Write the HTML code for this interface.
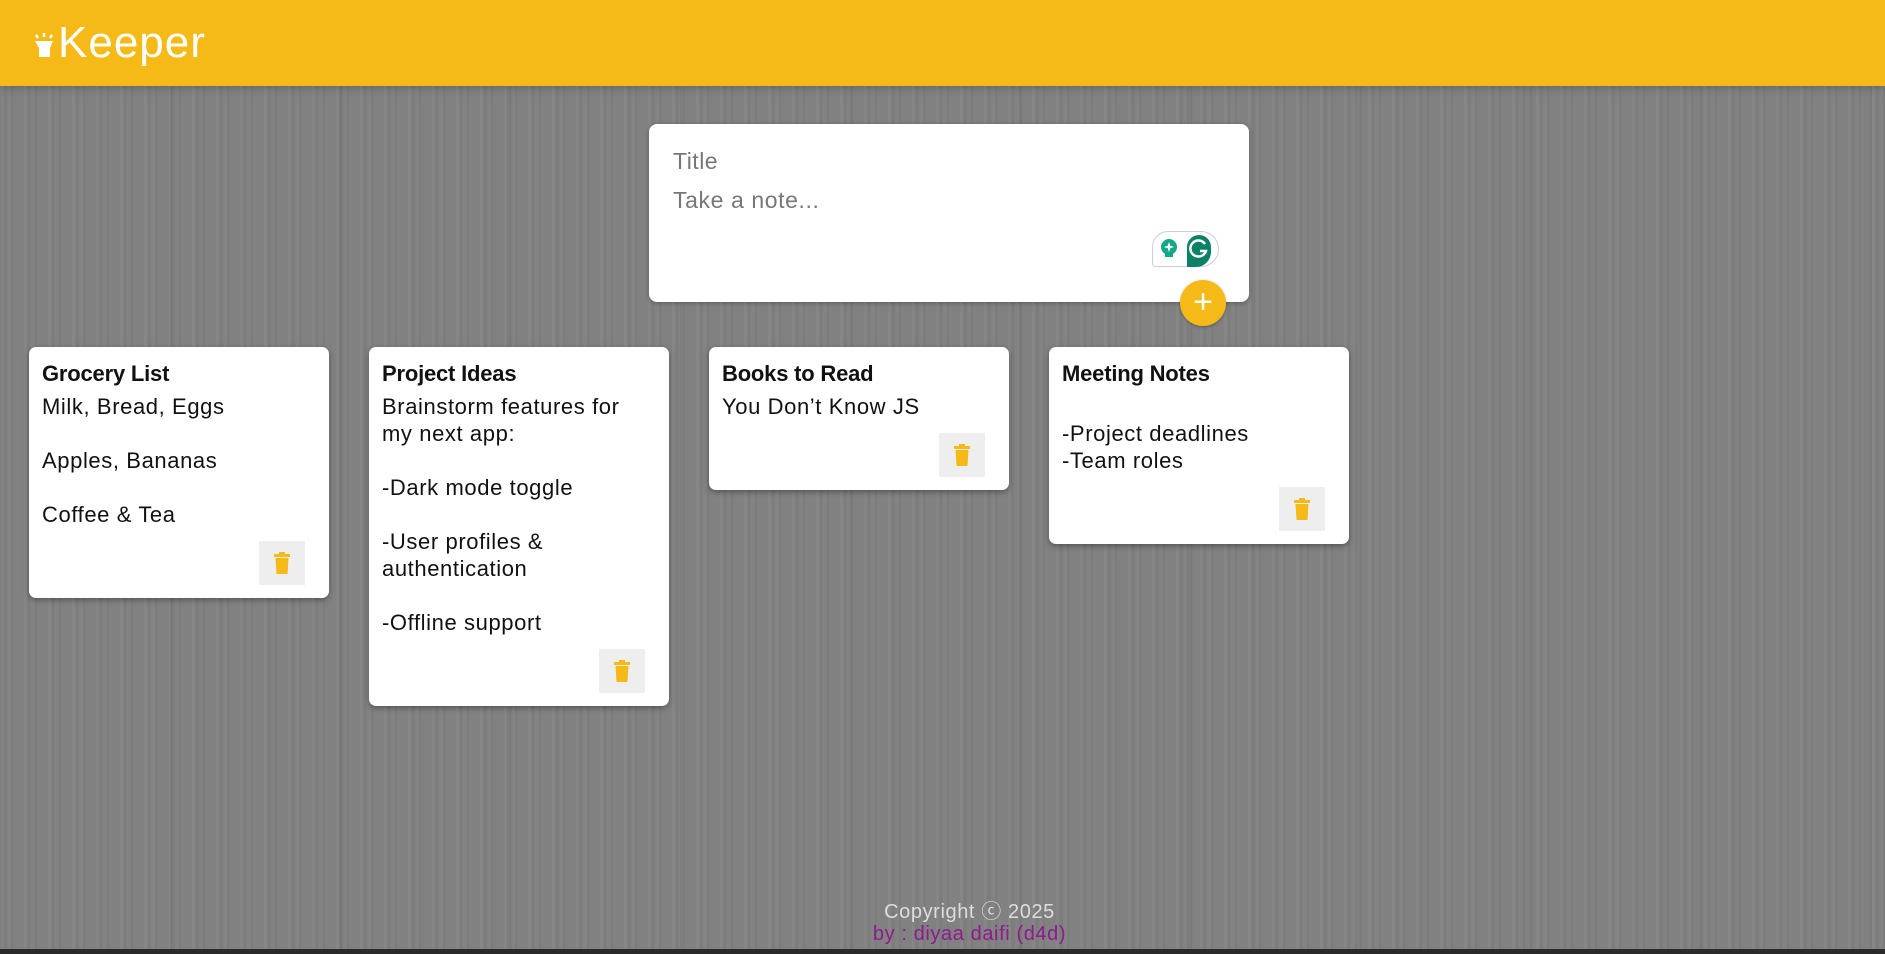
<!DOCTYPE html>
<html><head><meta charset="utf-8"><style>
*{box-sizing:border-box;margin:0;padding:0}
body{width:1885px;height:954px;overflow:hidden;font-family:"Liberation Sans",sans-serif;position:relative;
background:#818181;
background-image:repeating-linear-gradient(90deg,rgba(255,255,255,0.04) 0 3px,rgba(0,0,0,0.03) 3px 7px,rgba(255,255,255,0.02) 7px 11px,rgba(0,0,0,0.04) 11px 13px,transparent 13px 24px),
repeating-linear-gradient(90deg,rgba(0,0,0,0.05) 0 2px,transparent 2px 170px);}
header{position:absolute;left:0;top:0;width:1885px;height:86px;background:#f5ba18;box-shadow:0 0 10px rgba(0,0,0,0.3)}
.logo{position:absolute;left:33px;top:18px;color:#fff;font-size:44px;letter-spacing:1px}
.create{position:absolute;left:649px;top:124px;width:600px;height:178px;background:#fff;border-radius:8px;box-shadow:0 1px 5px rgba(0,0,0,0.3)}
.create .t{position:absolute;left:24px;top:24px;font-size:23px;color:#777;letter-spacing:0.5px}
.create .n{position:absolute;left:24px;top:63px;font-size:23px;color:#777;letter-spacing:0.6px}
.gram{position:absolute;left:503px;top:107px;width:67px;height:36px;border:1px solid #ccd;border-radius:16px 18px 18px 3px;background:#fff}
.plus{position:absolute;left:1180px;top:280px;width:46px;height:46px;border-radius:50%;background:#f5ba18;box-shadow:0 1px 3px rgba(0,0,0,0.3);color:#fff;font-size:34px;line-height:44px;text-align:center;font-weight:300}
.note{position:absolute;top:347px;width:300px;background:#fff;border-radius:7px;box-shadow:0 2px 6px rgba(0,0,0,0.35);padding:13px 13px 13px 13px}
.note h1{font-size:22px;line-height:27px;font-weight:bold;color:#111;margin-bottom:6px;letter-spacing:-0.2px}
.note p{font-size:22px;line-height:27px;color:#111;white-space:pre-wrap;margin-bottom:13px;letter-spacing:0.6px}
.del{margin-left:auto;margin-right:11px;width:46px;height:44px;background:#eee;display:flex;align-items:center;justify-content:center}
.foot{position:absolute;left:27px;width:1885px;text-align:center;font-size:20px;letter-spacing:0.6px}
.bar{position:absolute;left:0;top:949px;width:1885px;height:5px;background:#2a2a2a}
</style></head><body>
<header><div class="logo"><svg width="22" height="26" viewBox="0 0 22 26" style="margin-right:3px;vertical-align:-2px"><path d="M3 2l2 3M11 0v4M19 2l-2 3" stroke="#fff" stroke-width="2.5"/><path d="M2 8h18l-3 7v9H6v-9z" fill="#fff"/></svg>Keeper</div></header>
<div class="create"><div class="t">Title</div><div class="n">Take a note...</div>
<div class="gram"><svg width="67" height="36" viewBox="0 0 67 36"><circle cx="16" cy="15" r="8" fill="#14a88a"/><path d="M12 20h8v5h-8z" fill="#14a88a"/><path d="M16 10l1.3 3.7 3.7 1.3-3.7 1.3-1.3 3.7-1.3-3.7-3.7-1.3 3.7-1.3z" fill="#fff"/><path d="M34 35V15a12 12 0 0 1 24 0v5a15 15 0 0 1-15 15z" fill="#0b8266"/><path d="M52 12a8 8 0 1 0 1 7h-6" stroke="#fff" stroke-width="2.5" fill="none"/></svg></div>
</div>
<div class="plus">+</div>

<div class="note" style="left:29px"><h1>Grocery List</h1><p>Milk, Bread, Eggs

Apples, Bananas

Coffee &amp; Tea</p><div class="del"><svg width="16" height="22" viewBox="0 0 16 22"><rect x="5" y="0" width="6" height="2" fill="#f5ba18"/><rect x="0" y="2" width="16" height="3" fill="#f5ba18"/><path d="M1.5 6h13l-1 16h-11z" fill="#f5ba18"/></svg></div></div>

<div class="note" style="left:369px"><h1>Project Ideas</h1><p>Brainstorm features for
my next app:

-Dark mode toggle

-User profiles &amp;
authentication

-Offline support</p><div class="del"><svg width="16" height="22" viewBox="0 0 16 22"><rect x="5" y="0" width="6" height="2" fill="#f5ba18"/><rect x="0" y="2" width="16" height="3" fill="#f5ba18"/><path d="M1.5 6h13l-1 16h-11z" fill="#f5ba18"/></svg></div></div>

<div class="note" style="left:709px"><h1>Books to Read</h1><p>You Don’t Know JS</p><div class="del"><svg width="16" height="22" viewBox="0 0 16 22"><rect x="5" y="0" width="6" height="2" fill="#f5ba18"/><rect x="0" y="2" width="16" height="3" fill="#f5ba18"/><path d="M1.5 6h13l-1 16h-11z" fill="#f5ba18"/></svg></div></div>

<div class="note" style="left:1049px"><h1>Meeting Notes</h1><p>
-Project deadlines
-Team roles</p><div class="del"><svg width="16" height="22" viewBox="0 0 16 22"><rect x="5" y="0" width="6" height="2" fill="#f5ba18"/><rect x="0" y="2" width="16" height="3" fill="#f5ba18"/><path d="M1.5 6h13l-1 16h-11z" fill="#f5ba18"/></svg></div></div>

<div class="foot" style="top:895px;color:#ddd">Copyright ⓒ 2025</div>
<div class="foot" style="top:923px;color:#8e1a8e">by : diyaa daifi (d4d)</div>
<div class="bar"></div>
</body></html>
